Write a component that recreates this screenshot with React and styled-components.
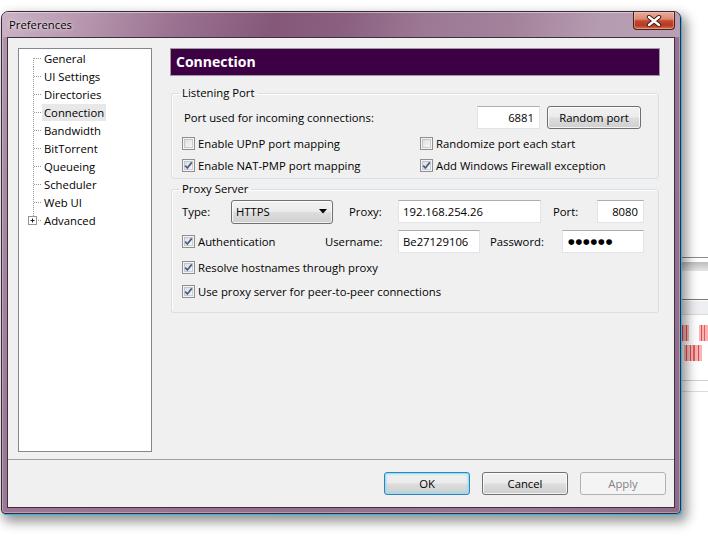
import React from 'react';
import styled, { createGlobalStyle, css } from 'styled-components';

const FS = '11.3px';

const Global = createGlobalStyle`
  html, body { margin: 0; padding: 0; background: #fff; }
  body {
    font-family: "Open Sans", "Noto Sans", sans-serif;
    font-size: ${FS};
    color: #000;
  }
  * { box-sizing: border-box; }
`;

const Desktop = styled.div`
  position: relative;
  width: 708px;
  height: 546px;
  overflow: hidden;
  background: #fff;
`;

/* window partly hidden behind the dialog */
const BackWindow = styled.div`
  position: absolute;
  left: 660px;
  top: 248px;
  width: 80px;
  height: 160px;
  background: #fff;
  display: flex;
  flex-direction: column;
`;

const BackBand = styled.div`
  flex: none;
  height: ${(p) => p.$h}px;
  margin-top: ${(p) => p.$mt}px;
  background: ${(p) => p.$bg};
`;

const stripes = css`
  background:
    linear-gradient(90deg,
      transparent 0 21px, #f7b5b5 21px 22px, #e04848 22px 23px, #f7b5b5 23px 26px, #e04848 26px 27px, #f7b5b5 27px 29px,
      transparent 29px 39px, #f7b5b5 39px 41px, #e04848 41px 42px, #f7b5b5 42px 44px, #e65a5a 44px 45px, #f7b5b5 45px 48px,
      #e04848 48px 49px, #f7b5b5 49px 80px);
`;
const stripes2 = css`
  background:
    linear-gradient(90deg,
      transparent 0 24px, #f7b5b5 24px 26px, #e04848 26px 27px, #f7b5b5 27px 30px, #e04848 30px 31px, #f7b5b5 31px 33px,
      #e65a5a 33px 35px, #f7b5b5 35px 38px, #e04848 38px 39px, #f7b5b5 39px 42px, transparent 42px 80px);
`;
const StripeBand = styled.div`
  flex: none;
  height: 16px;
  margin-top: ${(p) => p.$mt}px;
  ${(p) => (p.$alt ? stripes2 : stripes)}
`;

const Window = styled.div`
  position: absolute;
  left: 1px;
  top: 11px;
  width: 680px;
  height: 503px;
  border: 1px solid #3a2a37;
  border-radius: 7px 7px 4px 4px;
  background: linear-gradient(100deg, #b397ad 0%, #9d7896 10%, #93708d 50%, #9a7794 80%, #8f6c8a 100%);
  box-shadow: inset 0 0 0 1px rgba(255, 255, 255, 0.3), 1px 1px 0 #2bb7ee,
    4px 6px 12px 2px rgba(0, 0, 0, 0.42);
  display: flex;
  flex-direction: column;
  overflow: hidden;
`;

const TitleBar = styled.div`
  flex: none;
  height: 25px;
  display: flex;
  align-items: flex-start;
  justify-content: space-between;
  padding: 0 5px 0 7px;
  background: linear-gradient(105deg, #cbb3c5 0%, #b797af 12%, #9a7190 26%, #855879 40%, #8a5f80 50%,
    #9c7894 62%, #a3829c 75%, #b69cb1 88%, #b89fb3 100%);
  box-shadow: inset 0 1px 0 rgba(255, 255, 255, 0.45);
`;

const Title = styled.span`
  line-height: 25px;
  font-size: ${FS};
  color: #000;
  text-shadow: 0 0 5px rgba(255, 255, 255, 0.8), 0 0 2px rgba(255, 255, 255, 0.6);
`;

const CloseButton = styled.div`
  width: 42px;
  height: 18px;
  border: 1px solid #4d1e16;
  border-top: none;
  border-radius: 0 0 4px 4px;
  background: linear-gradient(180deg, #e9ab9a 0%, #dc8a72 42%, #c2492f 52%, #b53a22 78%, #d56e50 100%);
  box-shadow: inset 0 0 0 1px rgba(255, 210, 200, 0.45);
  display: flex;
  align-items: center;
  justify-content: center;
`;

const Client = styled.div`
  flex: 1;
  margin: 0 5px 5px;
  border: 1px solid #3d313c;
  background: #f0f0f0;
  display: flex;
  flex-direction: column;
  min-height: 0;
`;

const Body = styled.div`
  flex: 1;
  display: flex;
  gap: 18px;
  padding: 10px 14px 7px 10px;
  min-height: 0;
`;

const Tree = styled.ul`
  flex: none;
  width: 134px;
  margin: 0;
  padding: 0;
  list-style: none;
  background: #fff;
  border: 1px solid #828790;
`;

const TreeItem = styled.li`
  height: 18px;
  display: flex;
  align-items: center;
`;

const TreeLabel = styled.span`
  height: 17px;
  line-height: 17px;
  padding: 0 2px;
  font-size: ${FS};
  background: ${(p) => (p.$selected ? '#e8e8e8' : 'transparent')};
`;

const Pane = styled.div`
  flex: 1;
  display: flex;
  flex-direction: column;
  min-width: 0;
`;

const Header = styled.div`
  flex: none;
  height: 28px;
  border: 1px solid #9c9c9c;
  background: #3d0045;
  color: #fff;
  font-weight: 700;
  font-size: 14px;
  line-height: 26px;
  padding-left: 5px;
`;

const Group = styled.fieldset`
  margin: ${(p) => p.$mt}px 1px 0 1px;
  padding: ${(p) => p.$pt}px 14px ${(p) => p.$pb}px 10px;
  border: 1px solid #d5dfe5;
  border-radius: 3px;
  min-width: 0;
  box-shadow: inset 1px 1px 0 #fff;
`;

const Legend = styled.legend`
  margin-left: -3px;
  padding: 0 3px;
  line-height: 14px;
  font-size: ${FS};
`;

const Row = styled.div`
  display: flex;
  align-items: center;
  height: ${(p) => p.$h || 23}px;
  margin-top: ${(p) => p.$mt || 0}px;
`;

const Label = styled.span`
  flex: ${(p) => (p.$w ? 'none' : '1')};
  width: ${(p) => (p.$w ? `${p.$w}px` : 'auto')};
  margin-left: ${(p) => p.$ml || 0}px;
  padding-left: ${(p) => p.$pl || 0}px;
  font-size: ${FS};
  white-space: nowrap;
`;

const Field = styled.input`
  flex: none;
  width: ${(p) => p.$w}px;
  height: 23px;
  margin: 0;
  padding: 0 ${(p) => (p.$right ? 5 : 4)}px 0 4px;
  border: 1px solid #e2e3ea;
  border-top-color: #abadb3;
  background: #fff;
  font-family: inherit;
  font-size: ${FS};
  color: #000;
  text-align: ${(p) => (p.$right ? 'right' : 'left')};
  outline: none;
`;

const MaskField = styled(Field)`
  font-family: "DejaVu Sans", sans-serif;
  font-size: 7.6px;
  letter-spacing: 0.9px;
  padding-left: 5px;
`;

const buttonFace = css`
  border: 1px solid #707070;
  border-radius: 3px;
  background: linear-gradient(180deg, #f2f2f2 0%, #ebebeb 48%, #dddddd 52%, #cfcfcf 100%);
  box-shadow: inset 0 0 0 1px rgba(255, 255, 255, 0.75);
`;

const Button = styled.button`
  flex: none;
  width: ${(p) => p.$w || 86}px;
  height: 23px;
  margin: 0 ${(p) => p.$mr || 0}px 0 ${(p) => p.$ml || 0}px;
  padding: 0;
  font-family: inherit;
  font-size: ${FS};
  color: #000;
  ${buttonFace}
  ${(p) =>
    p.$default &&
    css`
      border-color: #3c7fb1;
      box-shadow: inset 0 0 0 1px #8fe0fb, inset 0 0 2px 2px rgba(120, 215, 250, 0.35);
    `}
  ${(p) =>
    p.disabled &&
    css`
      border-color: #adb2b5;
      background: #f4f4f4;
      box-shadow: none;
      color: #838383;
    `}
`;

const Select = styled.div`
  flex: none;
  width: ${(p) => p.$w}px;
  height: 24px;
  display: flex;
  align-items: center;
  justify-content: space-between;
  padding: 0 5px 0 4px;
  font-size: ${FS};
  ${buttonFace}
`;

const CheckGrid = styled.div`
  display: grid;
  grid-template-columns: 238px 1fr;
  grid-auto-rows: 22px;
  margin-top: 3px;
`;

const CheckRow = styled.label`
  display: flex;
  align-items: center;
  gap: 3px;
  font-size: ${FS};
  white-space: nowrap;
  flex: none;
  width: ${(p) => (p.$w ? `${p.$w}px` : 'auto')};
  height: ${(p) => (p.$h ? `${p.$h}px` : 'auto')};
  margin-top: ${(p) => p.$mt || 0}px;
`;

const Box = styled.span`
  flex: none;
  width: 13px;
  height: 13px;
  border: 1px solid #8e8f8f;
  background: linear-gradient(135deg, #d4d6d9 0%, #eeeff0 60%, #fbfbfb 100%);
  box-shadow: inset 0 0 0 1px #f4f4f4, inset 0 0 0 2px rgba(170, 175, 180, 0.55);
  display: flex;
  align-items: center;
  justify-content: center;
`;

const Footer = styled.div`
  flex: none;
  display: flex;
  justify-content: flex-end;
  gap: 12px;
  padding: 12px 8px 12px;
  border-top: 1px solid #a0a0a0;
`;

function Check({ checked, children, ...rest }) {
  return (
    <CheckRow {...rest}>
      <Box>
        {checked && (
          <svg width="9" height="9" viewBox="0 0 9 9">
            <path d="M1.2 4.6 L3.4 7 L7.8 1.4" fill="none" stroke="#4a5b86" strokeWidth="1.7" />
          </svg>
        )}
      </Box>
      <span>{children}</span>
    </CheckRow>
  );
}

function Twig({ kind, expandable }) {
  const y1 = kind === 'first' ? 9 : 0;
  const y2 = kind === 'last' ? 9.5 : 18;
  return (
    <svg width="23" height="18" viewBox="0 0 23 18" style={{ flex: 'none' }}>
      <line x1="14.5" y1={y1} x2="14.5" y2={y2} stroke="#9a9a9a" strokeDasharray="1 1" />
      <line x1="15" y1="9.5" x2="23" y2="9.5" stroke="#9a9a9a" strokeDasharray="1 1" />
      {expandable && (
        <g>
          <rect x="9.5" y="5.5" width="8" height="8" fill="#fff" stroke="#949494" />
          <path d="M11.5 9.5h4M13.5 7.5v4" stroke="#1f1f1f" />
        </g>
      )}
    </svg>
  );
}

const pages = ['General', 'UI Settings', 'Directories', 'Connection', 'Bandwidth', 'BitTorrent', 'Queueing', 'Scheduler', 'Web UI', 'Advanced'];

export default function App() {
  return (
    <Desktop>
      <Global />
      <BackWindow>
        <BackBand $mt={9} $h={1} $bg="#8a8a8a" />
        <BackBand $mt={4} $h={9} $bg="linear-gradient(180deg, #bdbdbd, #e6e6e6)" />
        <BackBand $mt={28} $h={1} $bg="#7a7a7a" />
        <BackBand $mt={1} $h={13} $bg="#eeeff2" />
        <BackBand $mt={0} $h={1} $bg="#dadada" />
        <StripeBand $mt={10} />
        <StripeBand $mt={4} $alt />
        <BackBand $mt={19} $h={1} $bg="#cfcfcf" />
        <BackBand $mt={10} $h={1} $bg="#dcdcdc" />
      </BackWindow>
      <Window>
        <TitleBar>
          <Title>Preferences</Title>
          <CloseButton>
            <svg width="16" height="12" viewBox="0 0 16 12">
              <path d="M3 2 L13 10 M13 2 L3 10" stroke="#4a1c14" strokeWidth="4.4" strokeLinecap="round" />
              <path d="M3 2 L13 10 M13 2 L3 10" stroke="#fff" strokeWidth="2.4" strokeLinecap="round" />
            </svg>
          </CloseButton>
        </TitleBar>
        <Client>
          <Body>
            <Tree>
              {pages.map((p, i) => (
                <TreeItem key={p}>
                  <Twig kind={i === 0 ? 'first' : i === pages.length - 1 ? 'last' : 'mid'} expandable={p === 'Advanced'} />
                  <TreeLabel $selected={p === 'Connection'}>{p}</TreeLabel>
                </TreeItem>
              ))}
            </Tree>
            <Pane>
              <Header>Connection</Header>
              <Group $mt={10} $pt={6} $pb={2}>
                <Legend>Listening Port</Legend>
                <Row>
                  <Label $pl={2}>Port used for incoming connections:</Label>
                  <Field $w={63} $right readOnly value="6881" />
                  <Button $w={94} $ml={7} $mr={3}>Random port</Button>
                </Row>
                <CheckGrid>
                  <Check>Enable UPnP port mapping</Check>
                  <Check>Randomize port each start</Check>
                  <Check checked>Enable NAT-PMP port mapping</Check>
                  <Check checked>Add Windows Firewall exception</Check>
                </CheckGrid>
              </Group>
              <Group $mt={3} $pt={4} $pb={9}>
                <Legend>Proxy Server</Legend>
                <Row>
                  <Label $w={49}>Type:</Label>
                  <Select $w={102}>
                    <span>HTTPS</span>
                    <svg width="8" height="5" viewBox="0 0 8 5">
                      <path d="M0 0 H8 L4 4.5 Z" fill="#000" />
                    </svg>
                  </Select>
                  <Label $w={49} $ml={16}>Proxy:</Label>
                  <Field $w={143} readOnly value="192.168.254.26" />
                  <Label $w={44} $ml={12}>Port:</Label>
                  <Field $w={47} $right readOnly value="8080" />
                </Row>
                <Row $mt={7}>
                  <Check checked $w={143}>Authentication</Check>
                  <Label $w={73}>Username:</Label>
                  <Field $w={82} readOnly value="Be27129106" />
                  <Label $w={72} $ml={10}>Password:</Label>
                  <MaskField $w={82} readOnly value="●●●●●●" />
                </Row>
                <Check checked $h={24} $mt={2}>Resolve hostnames through proxy</Check>
                <Check checked $h={24}>Use proxy server for peer-to-peer connections</Check>
              </Group>
            </Pane>
          </Body>
          <Footer>
            <Button $default>OK</Button>
            <Button>Cancel</Button>
            <Button disabled>Apply</Button>
          </Footer>
        </Client>
      </Window>
    </Desktop>
  );
}
